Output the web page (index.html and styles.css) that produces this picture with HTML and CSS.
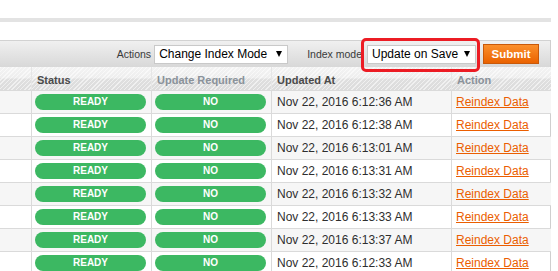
FILE: index.html
```html
<!DOCTYPE html>
<html lang="en">
<head>
    <meta charset="UTF-8">
    <meta name="viewport" content="width=device-width, initial-scale=1.0">
    <title>Index Management</title>
    <link rel="stylesheet" href="styles.css">
</head>
<body>
    <div class="page">
        <div class="top-strip"></div>

        <div class="grid">
            <!-- Mass action bar -->
            <div class="massaction">
                <span class="label">Actions</span>
                <div class="select select-actions"><span>Change Index Mode</span><span class="arrow"></span></div>
                <span class="label label-mode">Index mode</span>
                <div class="select select-mode"><span>Update on Save</span><span class="arrow"></span></div>
                <button class="submit">Submit</button>
                <div class="highlight"></div>
            </div>

            <table class="data">
                <colgroup>
                    <col class="c-check">
                    <col class="c-status">
                    <col class="c-update">
                    <col class="c-date">
                    <col class="c-action">
                </colgroup>
                <thead>
                    <tr>
                        <th></th>
                        <th class="sortable">Status</th>
                        <th>Update Required</th>
                        <th class="sortable">Updated At</th>
                        <th>Action</th>
                    </tr>
                </thead>
                <tbody>
                    <tr class="even">
                        <td></td>
                        <td><span class="pill">Ready</span></td>
                        <td><span class="pill">No</span></td>
                        <td>Nov 22, 2016 6:12:36 AM</td>
                        <td><a href="#">Reindex Data</a></td>
                    </tr>
                    <tr>
                        <td></td>
                        <td><span class="pill">Ready</span></td>
                        <td><span class="pill">No</span></td>
                        <td>Nov 22, 2016 6:12:38 AM</td>
                        <td><a href="#">Reindex Data</a></td>
                    </tr>
                    <tr class="even">
                        <td></td>
                        <td><span class="pill">Ready</span></td>
                        <td><span class="pill">No</span></td>
                        <td>Nov 22, 2016 6:13:01 AM</td>
                        <td><a href="#">Reindex Data</a></td>
                    </tr>
                    <tr>
                        <td></td>
                        <td><span class="pill">Ready</span></td>
                        <td><span class="pill">No</span></td>
                        <td>Nov 22, 2016 6:13:31 AM</td>
                        <td><a href="#">Reindex Data</a></td>
                    </tr>
                    <tr class="even">
                        <td></td>
                        <td><span class="pill">Ready</span></td>
                        <td><span class="pill">No</span></td>
                        <td>Nov 22, 2016 6:13:32 AM</td>
                        <td><a href="#">Reindex Data</a></td>
                    </tr>
                    <tr>
                        <td></td>
                        <td><span class="pill">Ready</span></td>
                        <td><span class="pill">No</span></td>
                        <td>Nov 22, 2016 6:13:33 AM</td>
                        <td><a href="#">Reindex Data</a></td>
                    </tr>
                    <tr class="even">
                        <td></td>
                        <td><span class="pill">Ready</span></td>
                        <td><span class="pill">No</span></td>
                        <td>Nov 22, 2016 6:13:37 AM</td>
                        <td><a href="#">Reindex Data</a></td>
                    </tr>
                    <tr>
                        <td></td>
                        <td><span class="pill">Ready</span></td>
                        <td><span class="pill">No</span></td>
                        <td>Nov 22, 2016 6:12:33 AM</td>
                        <td><a href="#">Reindex Data</a></td>
                    </tr>
                </tbody>
            </table>
        </div>
    </div>
</body>
</html>
```

FILE: styles.css
```css
body {
    margin: 0;
    padding: 0;
    background-color: #fff;
    font-family: "Liberation Sans", Arial, sans-serif;
    overflow: hidden;
}
.page {
    width: 551px;
}
.top-strip {
    margin-top: 18px;
    height: 4px;
    background-color: #e3e3e3;
}
.grid {
    margin-top: 18px;
    border-right: 1px solid #cfcfcf;
}
.massaction {
    position: relative;
    height: 26px;
    border-top: 1px solid #d2d2d2;
    background: linear-gradient(#f0f0f0, #d8d8d8);
    display: flex;
    align-items: center;
    justify-content: flex-end;
    padding-right: 11px;
}
.label {
    font-size: 10.5px;
    color: #3a3a3a;
    margin-right: 3px;
}
.label-mode {
    margin-left: 19px;
    margin-right: 5px;
}
.select {
    box-sizing: border-box;
    height: 19px;
    background-color: #fff;
    border: 1px solid #c9c9c9;
    display: flex;
    align-items: center;
    justify-content: space-between;
    padding: 0 5px 0 4px;
    font-size: 12px;
    color: #000;
}
.select-actions {
    width: 134px;
}
.select-mode {
    width: 109px;
}
.arrow {
    width: 0;
    height: 0;
    border-left: 3px solid transparent;
    border-right: 3px solid transparent;
    border-top: 6px solid #000;
}
.submit {
    box-sizing: border-box;
    margin-left: 7px;
    width: 56px;
    height: 20px;
    padding: 0;
    border: 1px solid #c8590a;
    background: linear-gradient(#fb8f2c, #ea6200);
    color: #fff;
    font-family: "Liberation Sans", Arial, sans-serif;
    font-size: 11.5px;
    font-weight: bold;
}
.highlight {
    position: absolute;
    left: 361px;
    top: -3px;
    width: 119px;
    height: 34px;
    box-sizing: border-box;
    border: 3px solid #ec1c24;
    border-radius: 5px;
}
.data {
    width: 551px;
    table-layout: fixed;
    border-collapse: separate;
    border-spacing: 0;
    font-size: 12px;
}
.c-check { width: 31px; }
.c-status { width: 120px; }
.c-update { width: 120px; }
.c-date { width: 180px; }
.c-action { width: 100px; }
.data th {
    height: 23px;
    padding: 2px 5px 0;
    box-sizing: border-box;
    text-align: left;
    font-size: 11px;
    font-weight: bold;
    color: #8a929a;
    border-left: 1px solid #e6e6e6;
    background:
        repeating-linear-gradient(135deg, rgba(255, 255, 255, 0.55) 0 1px, transparent 1px 3px),
        linear-gradient(#f3f3f3 0%, #eeeeee 48%, #dfdfdf 52%, #dcdcdc 100%);
}
.data th.sortable {
    color: #4a4a4a;
}
.data td {
    padding: 0 5px;
    line-height: 22px;
    border-top: 1px solid #dadada;
    border-left: 1px solid #dadada;
    color: #2e2e2e;
    white-space: nowrap;
    overflow: hidden;
}
.data th:first-child,
.data td:first-child {
    border-left: none;
}
.data tr.even td {
    background-color: #f6f6f6;
}
.data td:nth-child(2),
.data td:nth-child(3) {
    padding: 0 5px 0 3px;
}
.data td:last-child {
    padding-left: 4px;
}
.pill {
    display: block;
    height: 16px;
    margin: 3px 0;
    border-radius: 8px;
    background-color: #3cb862;
    color: #fff;
    font-size: 10px;
    font-weight: bold;
    line-height: 16px;
    text-align: center;
    text-transform: uppercase;
}
.data a {
    color: #eb5e00;
    text-decoration: underline;
}
```
